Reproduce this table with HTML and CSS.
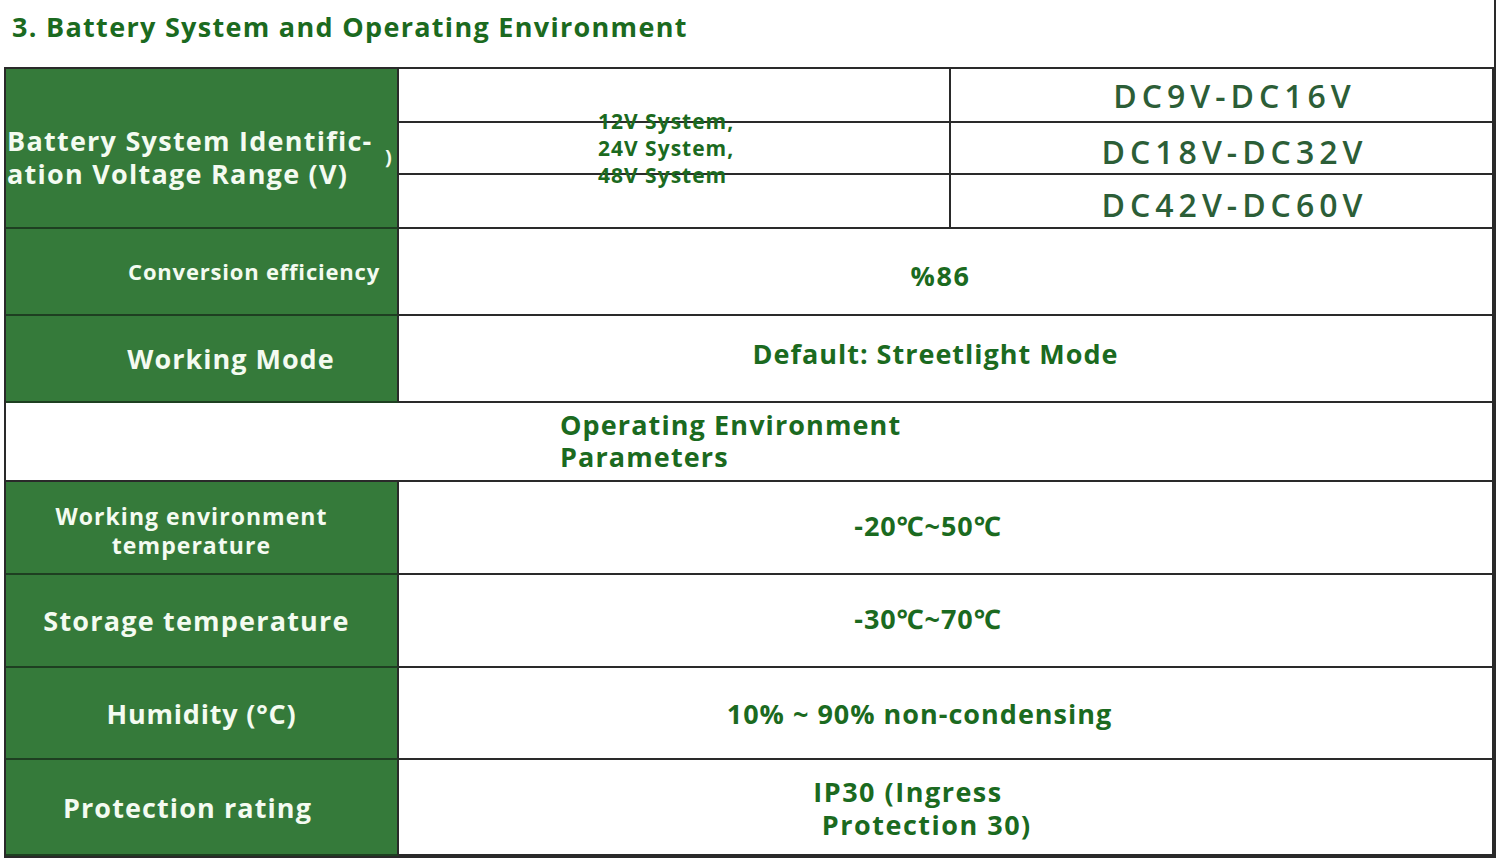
FILE: index.html
```html
<!DOCTYPE html>
<html lang="en">
<head>
<meta charset="utf-8">
<title>Battery System and Operating Environment</title>
<link rel="stylesheet" href="styles.css">
</head>
<body>
<div class="page">
  <h1 class="title">3. Battery System and Operating Environment</h1>
  <div class="spec">
    <div class="label label-battery"><span>Battery System Identific-<br>ation Voltage Range (V)</span><span class="stray">)</span></div>
    <div class="mid sub"></div>
    <div class="mid sub"></div>
    <div class="mid sub last"></div>
    <div class="systems">12V System,<br>24V System,<br>48V System</div>
    <div class="dc dc1">DC9V-DC16V</div>
    <div class="dc dc2">DC18V-DC32V</div>
    <div class="dc dc3">DC42V-DC60V</div>

    <div class="label label-conv">Conversion efficiency</div>
    <div class="value value-eff">%86</div>

    <div class="label label-mode">Working Mode</div>
    <div class="value value-mode">Default: Streetlight Mode</div>

    <div class="section">Operating Environment<br>Parameters</div>

    <div class="label label-wet">Working environment<br>temperature</div>
    <div class="value value-temp">-20℃~50℃</div>

    <div class="label label-st">Storage temperature</div>
    <div class="value value-temp">-30℃~70℃</div>

    <div class="label label-hum">Humidity (°C)</div>
    <div class="value value-hum">10% ~ 90% non-condensing</div>

    <div class="label label-prot">Protection rating</div>
    <div class="value value-prot"><span>IP30 (Ingress<br>&nbsp;Protection 30)</span></div>
  </div>
</div>
</body>
</html>
```

FILE: styles.css
```css
* { box-sizing: border-box; }

html, body {
  margin: 0;
  padding: 0;
  background: #ffffff;
}

body {
  font-family: "Open Sans", "Noto Sans", "DejaVu Sans", sans-serif;
  width: 1500px;
  height: 863px;
  overflow: hidden;
}

.page {
  width: 1496px;
  border-right: 2px solid #2a2a2a;
  height: 858px;
}

.title {
  margin: 0;
  height: 67px;
  padding: 9px 0 0 12px;
  font-size: 27px;
  font-weight: 700;
  line-height: 36px;
  color: #1b6a20;
  letter-spacing: 1.3px;
}

.spec {
  margin-left: 4px;
  border-top: 2px solid #2a2a2a;
  border-left: 2px solid #2a2a2a;
  border-bottom: 2px solid #2a2a2a;
  display: grid;
  grid-template-columns: 393px 552px 1fr;
  grid-template-rows: 54px 52px 54px 87px 87px 79px 93px 93px 92px 96px;
}

.label {
  background: #357a3a;
  color: #f4fbf1;
  font-weight: 700;
  border-bottom: 2px solid #1e3f21;
  border-right: 2px solid #2a2a2a;
  display: flex;
  align-items: center;
  justify-content: center;
  text-align: center;
  font-size: 27px;
  line-height: 33px;
  letter-spacing: 1.1px;
}

.label-battery {
  grid-row: 1 / 4;
  grid-column: 1;
  justify-content: flex-start;
  text-align: left;
  padding: 18px 0 0 1px;
  letter-spacing: 1.25px;
  position: relative;
}

.stray {
  position: absolute;
  left: 379px;
  top: 76px;
  font-size: 20px;
  line-height: 24px;
  letter-spacing: 0;
}

.label-conv {
  font-size: 22px;
  letter-spacing: 0.8px;
  justify-content: flex-end;
  padding-right: 17px;
}

.label-mode { padding-left: 59px; letter-spacing: 1px; }
.label-wet { font-size: 23px; line-height: 29px; padding: 6px 20px 0 0; letter-spacing: 1.05px; }
.label-st { padding-right: 10px; letter-spacing: 1.2px; }
.label-hum { padding-right: 0; letter-spacing: 0.8px; }
.label-prot { padding-right: 28px; letter-spacing: 1.1px; }

.mid {
  grid-column: 2;
  border-right: 2px solid #2a2a2a;
  border-bottom: 2px solid #2a2a2a;
}

.mid.sub:nth-child(2) { grid-row: 1; }
.mid.sub:nth-child(3) { grid-row: 2; }
.mid.sub:nth-child(4) { grid-row: 3; }

.systems {
  grid-row: 1 / 4;
  grid-column: 2;
  align-self: center;
  justify-self: start;
  margin-left: 199px;
  margin-top: -2px;
  font-size: 21px;
  line-height: 27px;
  font-weight: 700;
  letter-spacing: 1px;
  color: #1b6a20;
  position: relative;
  z-index: 1;
}

.dc {
  grid-column: 3;
  border-right: 2px solid #2a2a2a;
  border-bottom: 2px solid #2a2a2a;
  display: flex;
  align-items: center;
  justify-content: center;
  padding-left: 26px;
  font-size: 32px;
  font-weight: 600;
  letter-spacing: 5px;
  color: #2c5e37;
}

.dc2 { padding-top: 7px; }
.dc3 { padding-top: 6px; }

.value {
  grid-column: 2 / 4;
  border-bottom: 2px solid #2a2a2a;
  border-right: 2px solid #2a2a2a;
  display: flex;
  align-items: center;
  justify-content: center;
  font-weight: 700;
  color: #1b6a20;
  font-size: 27px;
  letter-spacing: 1px;
}

.value-eff { padding: 8px 10px 0 0; letter-spacing: 1.6px; }
.value-mode { padding: 0 20px 10px 0; }
.value-temp { padding: 0 35px 4px 0; letter-spacing: 0.9px; }
.value-hum { padding: 0 52px 0 0; }
.value-prot { padding: 2px 46px 0 0; line-height: 33px; letter-spacing: 1.5px; }

.section {
  grid-column: 1 / 4;
  border-bottom: 2px solid #2a2a2a;
  border-right: 2px solid #2a2a2a;
  display: flex;
  align-items: center;
  padding: 0 0 2px 554px;
  font-size: 27px;
  line-height: 32px;
  font-weight: 700;
  letter-spacing: 1.1px;
  color: #1b6a20;
}
```
